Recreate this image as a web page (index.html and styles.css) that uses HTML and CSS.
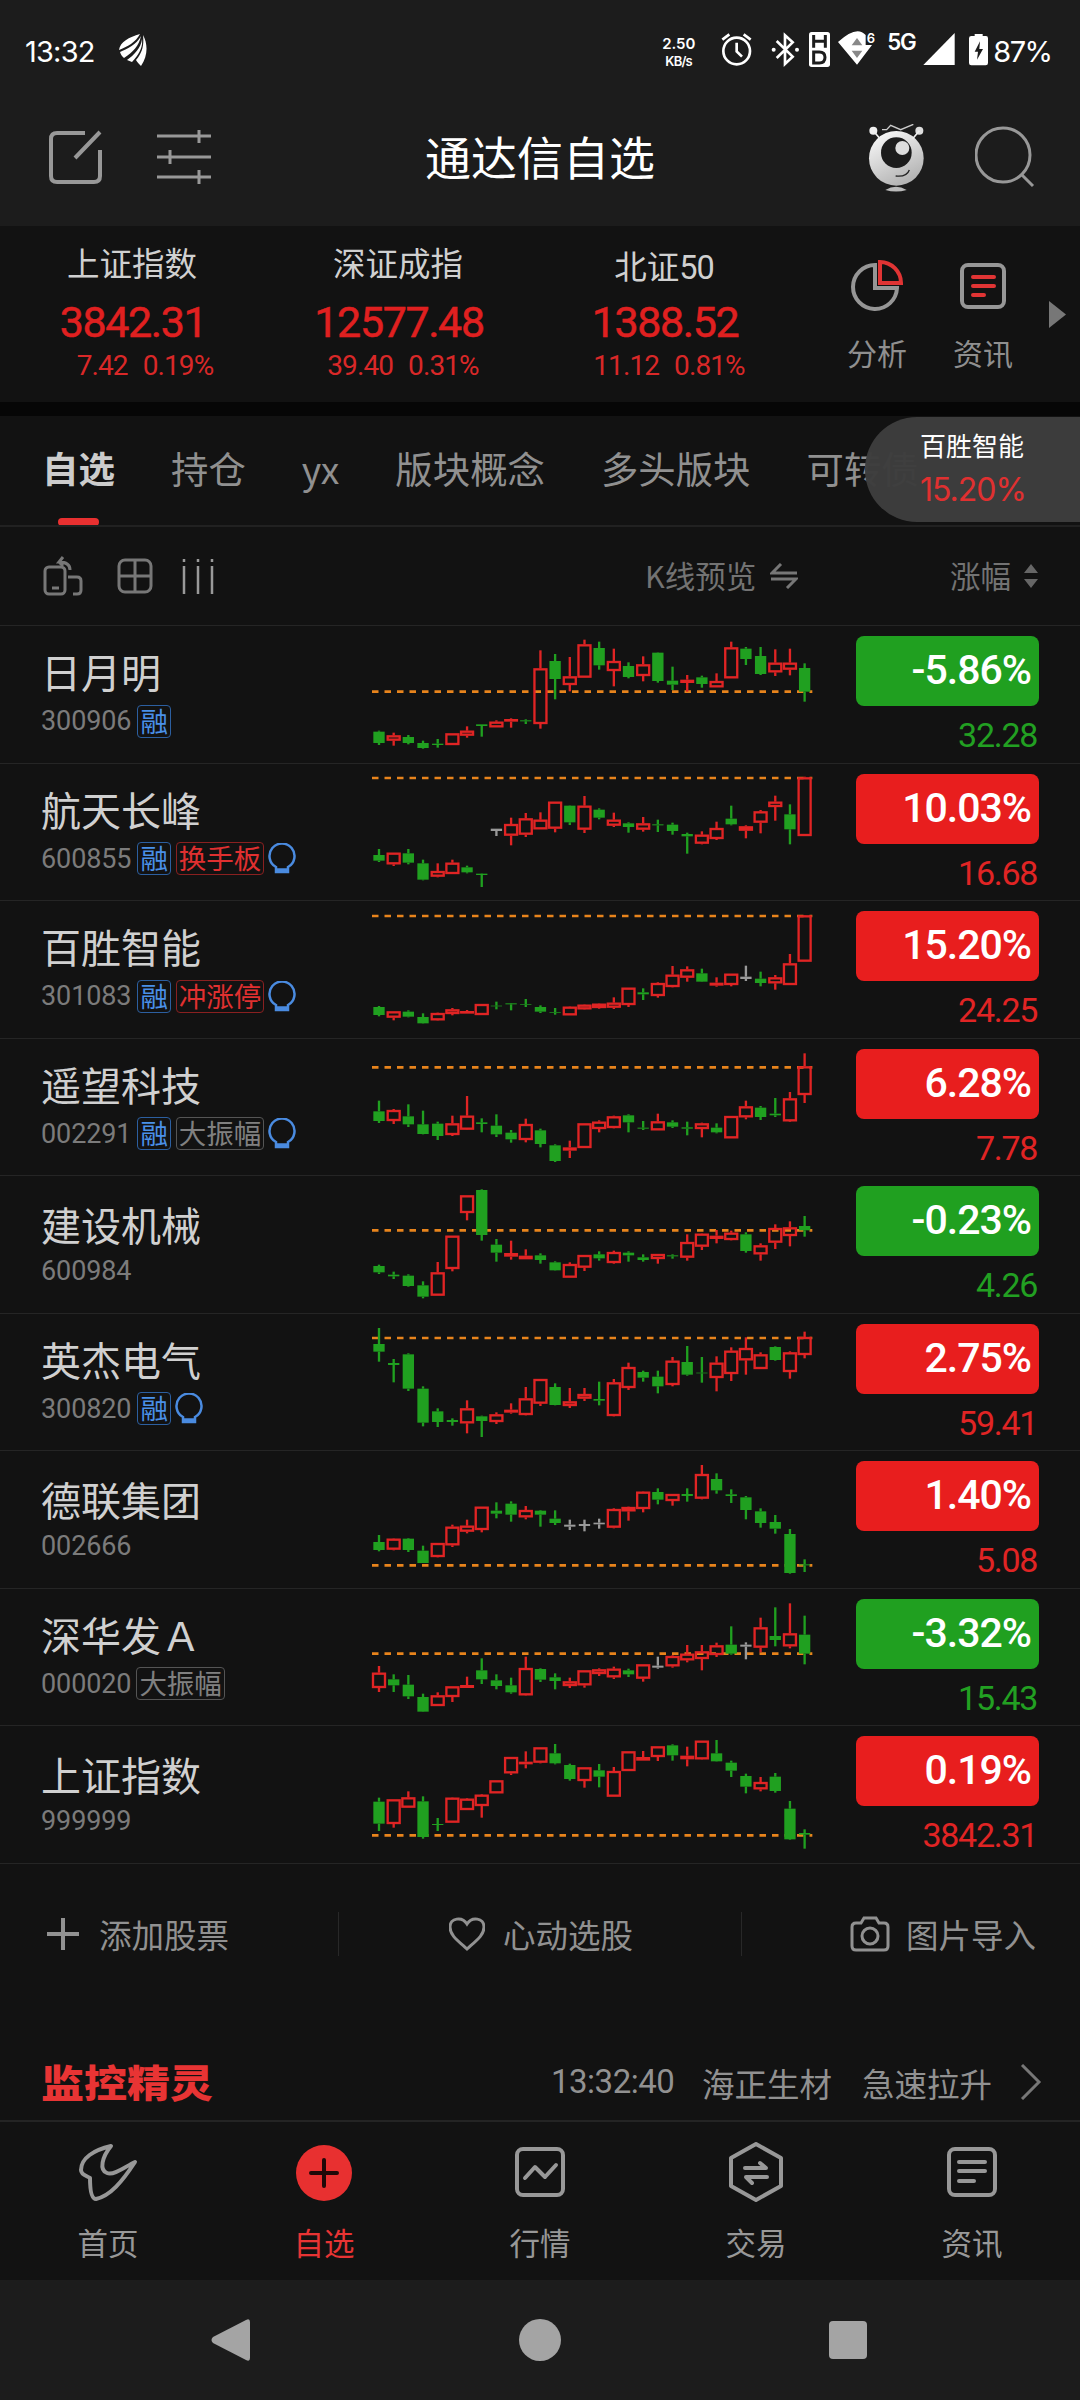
FILE: index.html
```html
<!DOCTYPE html>
<html lang="zh-CN">
<head>
	<meta charset="utf-8">
	<title>通达信自选</title>
	<link rel="stylesheet" href="styles.css">
</head>
<body>
	<div class="top">
		<div class="status">
			<span class="clock">13:32</span>
			<svg class="leaf" viewBox="0 0 28 32"><path d="M21 0C10 3 1 8 0 16C8 13 17 8 21 0ZM22 2C17 11 8 15 1 18C2 21 3 22 5 24C14 18 20 12 22 2ZM23 5C22 14 15 21 8 26L13 28C20 20 24 14 23 5ZM24 1C29 10 29 22 22 32C20 30 18 28 17 26C24 18 25 10 24 1Z"/></svg>
			<svg class="status-icons" viewBox="0 -60 1290 294">
				<text x="37" y="87" class="speed" textLength="99">2.50</text>
				<text x="46" y="139" class="speed small" textLength="82">KB/s</text>
				<g fill="none" stroke="#fff" stroke-width="8">
					<circle cx="260" cy="93" r="40"/>
					<path d="M260 68V94L276 110M217 59L238 43M302 59L281 43"/>
					<path d="M380 63L428 110L405 132V46L428 67L380 114"/>
				</g>
				<circle cx="371" cy="89" r="6"/><circle cx="441" cy="89" r="6"/>
				<rect x="477" y="36" width="63" height="105" rx="8"/>
				<path d="M491 45V83M526 45V83M491 64H526M491 96V129H508Q525 129 525 112Q525 96 508 96Z" fill="none" stroke="#1c1c1c" stroke-width="9"/>
				<path d="M564 66Q620 14 647 45V75H666L621 134Z"/>
				<path d="M621 54L637 76H605ZM605 92H637L621 114Z" fill="#888"/>
				<text x="650" y="69" class="speed small">6</text>
				<text x="712" y="90" class="net" textLength="88">5G</text>
				<path d="M914 39V135H820Z"/>
				<path d="M974 42H998V48H1008Q1014 48 1014 55V129Q1014 136 1007 136H964Q957 136 957 129V55Q957 48 964 48H974Z"/>
				<path d="M990 64L974 95H984L981 119L999 87H988Z" fill="#1c1c1c"/>
				<text x="1030" y="126" class="battery" textLength="179">87%</text>
			</svg>
		</div>
		<div class="titlebar">
			<svg class="edit" viewBox="0 0 54 54"><path d="M36 3H8Q2 3 2 9V46Q2 52 8 52H45Q51 52 51 46V20M51 2L26 28"/></svg>
			<svg class="sliders" viewBox="0 0 54 54"><path d="M0 6H54M0 27H54M0 47H54M42 0V13M13 20V34M42 40V54"/></svg>
			<h1>通达信自选</h1>
			<svg class="robot" viewBox="0 0 171 204">
				<defs><linearGradient id="skin" x1="0" y1="0" x2=".5" y2="1"><stop offset="0" stop-color="#fff"/><stop offset="1" stop-color="#b5b5b5"/></linearGradient></defs>
				<circle cx="85" cy="103" r="82" fill="url(#skin)"/>
				<circle cx="85" cy="86" r="46" fill="#1c1c1c"/>
				<circle cx="103" cy="72" r="21" fill="#ddd"/>
				<circle cx="16" cy="20" r="12" fill="#eee"/><circle cx="154" cy="20" r="12" fill="#ddd"/>
				<path d="M16 20L36 44M154 20L134 44" stroke="#eee" stroke-width="5"/>
				<path d="M42 17H56L68 4L98 17L136 1" fill="none" stroke="#ccc" stroke-width="4"/>
				<path d="M83 156Q116 160 124 138" fill="none" stroke="#222" stroke-width="4"/>
				<path d="M52 198Q84 178 116 198Q84 207 52 198Z" fill="#bbb"/>
			</svg>
			<svg class="search" viewBox="0 0 60 62"><circle cx="28" cy="29" r="27"/><path d="M46 48L58 60"/></svg>
		</div>
	</div>

	<div class="indexes">
		<div class="index">
			<div class="index-name">上证指数</div>
			<div class="index-value">3842.31</div>
			<div class="index-change shifted"><span>7.42</span><span>0.19%</span></div>
		</div>
		<div class="index">
			<div class="index-name">深证成指</div>
			<div class="index-value">12577.48</div>
			<div class="index-change"><span>39.40</span><span>0.31%</span></div>
		</div>
		<div class="index">
			<div class="index-name low">北证<span class="digits">50</span></div>
			<div class="index-value">1388.52</div>
			<div class="index-change"><span>11.12</span><span>0.81%</span></div>
		</div>
		<div class="shortcut">
			<svg viewBox="0 0 52 52"><path d="M24 5A22 22 0 1 0 46 28H24Z"/><path class="red" d="M29 2V23H50A21 21 0 0 0 29 2Z"/></svg>
			分析
		</div>
		<div class="shortcut">
			<svg viewBox="0 0 52 52"><rect x="5" y="5" width="42" height="42" rx="6"/><path class="red round" d="M16 17H37M16 26H37M16 35H27"/></svg>
			资讯
		</div>
		<svg class="more" viewBox="0 0 17 27"><path d="M0 0L17 13.5L0 27Z"/></svg>
	</div>

	<div class="tabs">
		<div class="tab active">自选</div>
		<div class="tab">持仓</div>
		<div class="tab">yx</div>
		<div class="tab">版块概念</div>
		<div class="tab">多头版块</div>
		<div class="tab">可转债</div>
		<div class="bubble">
			<span class="bubble-name">百胜智能</span>
			<span class="bubble-value">15.20%</span>
		</div>
	</div>

	<div class="tools">
		<svg class="rotate" viewBox="0 0 40 40"><rect x="2" y="11" width="20" height="27" rx="4"/><path d="M25 21H34Q38 21 38 25V34Q38 38 34 38H30M27 14Q27 6 16 6L20 1M16 6L20 10M9 32H16"/></svg>
		<svg class="grid" viewBox="0 0 36 36"><rect x="2" y="2" width="32" height="32" rx="6"/><path d="M18 2V34M2 18H34"/></svg>
		<svg class="cols" viewBox="0 0 32 36"><path d="M2 1V4M16 1V4M30 1V4M2 8V36M16 8V36M30 8V36"/></svg>
		<div class="preview">K线预览</div>
		<svg class="swap" viewBox="0 0 28 26"><path d="M11 1L2 10H27M1 16H26L17 25"/></svg>
		<div class="sort">涨幅</div>
		<svg class="arrows" viewBox="0 0 14 24"><path d="M7 0L14 9H0ZM0 15H14L7 24Z"/></svg>
	</div>

	<div class="stocks">
		<div class="stock">
			<div class="info"><div class="name">日月明</div><div class="code">300906<span class="tag blue">融</span></div></div>
			<svg class="chart"></svg>
			<div class="quote down"><div class="change">-5.86%</div><div class="price">32.28</div></div>
		</div>
		<div class="stock">
			<div class="info"><div class="name">航天长峰</div><div class="code">600855<span class="tag blue">融</span><span class="tag red">换手板</span><svg class="bulb" viewBox="0 0 28 31"><path d="M8 24A12.500 12.500 0 1 1 20 24V29H8ZM8 26.500H20"/></svg></div></div>
			<svg class="chart"></svg>
			<div class="quote up"><div class="change">10.03%</div><div class="price">16.68</div></div>
		</div>
		<div class="stock">
			<div class="info"><div class="name">百胜智能</div><div class="code">301083<span class="tag blue">融</span><span class="tag red">冲涨停</span><svg class="bulb" viewBox="0 0 28 31"><path d="M8 24A12.500 12.500 0 1 1 20 24V29H8ZM8 26.500H20"/></svg></div></div>
			<svg class="chart"></svg>
			<div class="quote up"><div class="change">15.20%</div><div class="price">24.25</div></div>
		</div>
		<div class="stock">
			<div class="info"><div class="name">遥望科技</div><div class="code">002291<span class="tag blue">融</span><span class="tag">大振幅</span><svg class="bulb" viewBox="0 0 28 31"><path d="M8 24A12.500 12.500 0 1 1 20 24V29H8ZM8 26.500H20"/></svg></div></div>
			<svg class="chart"></svg>
			<div class="quote up"><div class="change">6.28%</div><div class="price">7.78</div></div>
		</div>
		<div class="stock">
			<div class="info plain"><div class="name">建设机械</div><div class="code">600984</div></div>
			<svg class="chart"></svg>
			<div class="quote down"><div class="change">-0.23%</div><div class="price">4.26</div></div>
		</div>
		<div class="stock">
			<div class="info"><div class="name">英杰电气</div><div class="code">300820<span class="tag blue">融</span><svg class="bulb" viewBox="0 0 28 31"><path d="M8 24A12.500 12.500 0 1 1 20 24V29H8ZM8 26.500H20"/></svg></div></div>
			<svg class="chart"></svg>
			<div class="quote up"><div class="change">2.75%</div><div class="price">59.41</div></div>
		</div>
		<div class="stock">
			<div class="info plain"><div class="name">德联集团</div><div class="code">002666</div></div>
			<svg class="chart"></svg>
			<div class="quote up"><div class="change">1.40%</div><div class="price">5.08</div></div>
		</div>
		<div class="stock">
			<div class="info"><div class="name">深华发Ａ</div><div class="code">000020<span class="tag">大振幅</span></div></div>
			<svg class="chart"></svg>
			<div class="quote down"><div class="change">-3.32%</div><div class="price">15.43</div></div>
		</div>
		<div class="stock">
			<div class="info plain"><div class="name">上证指数</div><div class="code">999999</div></div>
			<svg class="chart"></svg>
			<div class="quote up"><div class="change">0.19%</div><div class="price">3842.31</div></div>
		</div>
	</div>

	<div class="actions">
		<div class="action">
			<svg class="plus" viewBox="0 0 32 32"><path d="M16 0V32M0 16H32"/></svg>添加股票
		</div>
		<div class="action middle">
			<svg class="heart" viewBox="0 0 36 34"><path d="M18 32C8 23 1 18 1 10C1 1 13-1 18 7C23-1 35 1 35 10C35 18 28 23 18 32Z"/></svg>心动选股
		</div>
		<div class="action last">
			<svg class="camera" viewBox="0 0 40 36"><path d="M6 7H11L14 2H26L29 7H34Q38 7 38 11V30Q38 34 34 34H6Q2 34 2 30V11Q2 7 6 7Z"/><circle cx="20" cy="20" r="8"/></svg>图片导入
		</div>
	</div>

	<div class="monitor">
		<span class="monitor-logo">监控精灵</span>
		<span class="monitor-time">13:32:40</span>
		<span class="monitor-stock">海正生材</span>
		<span class="monitor-event">急速拉升</span>
		<svg viewBox="0 0 22 36"><path d="M2 1L19 18L2 35"/></svg>
	</div>

	<div class="nav">
		<div class="nav-item">
			<svg viewBox="0 0 60 60"><path d="M33 4C16 8 3 16 3 28C3 33 9 34 12 36C12 46 13 57 18 57C32 54 44 40 57 20C48 24 36 34 29 31C21 28 24 15 33 4Z"/></svg>首页
		</div>
		<div class="nav-item active">
			<svg viewBox="0 0 60 60"><circle cx="30" cy="31" r="28"/><path class="dark" d="M30 18V44M17 31H43"/></svg>自选
		</div>
		<div class="nav-item">
			<svg viewBox="0 0 60 60"><rect x="7" y="7" width="46" height="46" rx="6"/><path d="M15 36L25 25L35 35L46 23"/></svg>行情
		</div>
		<div class="nav-item">
			<svg viewBox="0 0 60 60"><path d="M30 2L55 16V44L30 58L5 44V16ZM19 26H40L34 21M41 35H20L26 41"/></svg>交易
		</div>
		<div class="nav-item">
			<svg viewBox="0 0 60 60"><rect x="7" y="7" width="46" height="46" rx="6"/><path d="M17 20H43M17 29H43M17 39H32"/></svg>资讯
		</div>
	</div>

	<div class="system">
		<svg viewBox="0 0 44 44"><path d="M3 19L36 2Q40 0 40 4V40Q40 44 36 42L3 25Q0 22 3 19Z"/></svg>
		<svg viewBox="0 0 44 44"><circle cx="22" cy="22" r="21"/></svg>
		<svg viewBox="0 0 44 44"><rect x="3" y="3" width="38" height="38" rx="4"/></svg>
	</div>
	<script src="charts.js"></script>
</body>
</html>
```

FILE: styles.css
```css
body{
	margin:0;
	width:1080px;
	background-color:#121212;
	color:#d0d0d0;
	font-family:"Noto Sans CJK SC", sans-serif;
}
svg{
	flex:none;
}
.top{
	height:226px;
	background-color:#1c1c1c;
}
.status{
	display:flex;
	height:98px;
	color:#fff;
}
.clock{
	width:94px;
	padding-left:25px;
	font:29px/103px Inter, sans-serif;
	letter-spacing:-0.8px;
}
.leaf{
	width:28px;
	height:32px;
	margin-top:34px;
	fill:#fff;
}
.status-icons{
	width:430px;
	height:98px;
	margin-left:auto;
	fill:#fff;
}
.speed{
	font:600 45px Inter, sans-serif;
}
.speed.small{
	font-size:39px;
}
.net{
	font:600 67px Inter, sans-serif;
}
.battery{
	font:87px Inter, sans-serif;
}
.titlebar{
	display:flex;
	align-items:flex-start;
	padding:26px 0 0 49px;
}
.titlebar svg{
	fill:none;
	stroke:#989898;
	stroke-width:4;
}
.titlebar .edit, .sliders{
	width:54px;
	height:54px;
	margin:6px 54px 0 0;
}
.titlebar .sliders{
	stroke-width:3;
}
h1{
	width:230px;
	margin:-1px 0 0 160px;
	font-size:46px;
	font-weight:400;
	line-height:64px;
	color:#fff;
}
.titlebar .robot{
	width:57px;
	height:68px;
	margin-left:213px;
	stroke:none;
}
.titlebar .search{
	width:60px;
	height:62px;
	margin:2px 0 0 50px;
	stroke-width:3;
}

.indexes{
	display:flex;
	height:176px;
	border-bottom:14px solid #060606;
}
.index{
	width:266px;
	text-align:center;
}
.index-name{
	padding:16px 2px 0 0;
	height:54px;
	font-size:32.5px;
	line-height:40px;
}
.index-name.low{
	padding-top:19px;
	height:51px;
}
.digits{
	font-family:Roboto, sans-serif;
	letter-spacing:-1px;
}
.index-value{
	font:43px/52px Roboto, sans-serif;
	letter-spacing:-1.4px;
	-webkit-text-stroke:0.5px #e02020;
	color:#e02020;
}
.index-change{
	display:flex;
	justify-content:center;
	gap:15px;
	padding:3px 0 0 8px;
	font:28px/30px Roboto, sans-serif;
	letter-spacing:-0.9px;
	color:#d92828;
}
.index-change.shifted{
	padding-left:24px;
}
.shortcut{
	display:flex;
	flex-direction:column;
	align-items:center;
	width:106px;
	padding-top:34px;
	font-size:30px;
	line-height:40px;
	color:#8f8f8f;
}
.index + .shortcut{
	margin-left:26px;
}
.shortcut svg{
	width:52px;
	height:52px;
	margin-bottom:20px;
	fill:none;
	stroke:#969696;
	stroke-width:4;
}
.shortcut .red{
	stroke:#e03434;
}
.shortcut .round{
	stroke-linecap:round;
}
.more{
	width:17px;
	height:27px;
	margin:75px 0 0 13px;
	fill:#777;
}

.tabs{
	display:flex;
	gap:56px;
	box-sizing:border-box;
	position:relative;
	height:111px;
	padding:27px 0 0 42px;
	border-bottom:2px solid #212121;
	font-size:37.4px;
	line-height:50px;
	color:#909090;
	overflow:hidden;
}
.tab{
	flex:none;
	white-space:nowrap;
}
.tab.active{
	width:73px;
	font-size:36.5px;
	font-weight:700;
	color:#ccc;
}
.tab.active::after{
	content:"";
	display:block;
	width:41px;
	height:8px;
	margin:25px auto 0;
	border-radius:4px;
	background-color:#e83030;
}
/* floating quote over the end of the tab strip */
.bubble{
	position:absolute;
	right:0;
	top:1px;
	display:flex;
	flex-direction:column;
	box-sizing:border-box;
	width:215px;
	height:105px;
	padding:10px 0 0 55px;
	border-radius:52px 0 0 52px;
	background-color:rgba(61,61,61,0.98);
}
.bubble-name{
	font-size:26px;
	line-height:36px;
	color:#fff;
}
.bubble-value{
	font:32px/53px Inter, sans-serif;
	letter-spacing:-1px;
	color:#e03030;
}

.tools{
	display:flex;
	align-items:center;
	height:98px;
	padding-left:43px;
	font-size:30.5px;
	line-height:46px;
	color:#737373;
}
.tools svg{
	fill:none;
	stroke:#777;
	stroke-width:3;
}
.rotate{
	width:40px;
	height:40px;
}
.grid{
	width:36px;
	height:36px;
	margin-left:34px;
}
.tools .cols{
	width:32px;
	height:36px;
	margin-left:29px;
	stroke:#999;
	stroke-width:2.5;
}
.preview{
	width:110px;
	margin:0 0 3px 431px;
	white-space:nowrap;
}
.swap{
	width:28px;
	height:26px;
	margin-left:15px;
}
.sort{
	width:62px;
	margin:0 0 3px 152px;
}
.tools .arrows{
	width:14px;
	height:24px;
	margin-left:12px;
	fill:#666;
	stroke:none;
}

.stock{
	display:flex;
	box-sizing:border-box;
	height:137.5px;
	border-top:1px solid #252525;
}
.stocks{
	border-bottom:1px solid #252525;
}
.info{
	box-sizing:border-box;
	width:360px;
	padding:19px 0 0 41px;
}
.name{
	font-size:40px;
	line-height:52px;
	height:56px;
	margin-bottom:3px;
}
.plain .name{
	padding-top:3px;
	height:53px;
}
.code{
	display:flex;
	align-items:center;
	height:34px;
	font:27px/34px Roboto, sans-serif;
	letter-spacing:-0.1px;
	color:#7b7b7b;
}
.tag{
	box-sizing:border-box;
	height:33px;
	margin-left:5px;
	padding:0 2px;
	border:1.5px solid #555;
	border-radius:4px;
	font:27.5px/29px "Noto Sans CJK SC", sans-serif;
	color:#808080;
}
.tag.blue{
	margin-left:6px;
	border-color:#2c5fa0;
	color:#4a90e8;
}
.tag.red{
	border-color:#8a2020;
	color:#e03030;
}
.bulb{
	width:28px;
	height:31px;
	margin-left:4px;
	fill:none;
	stroke:#4a8be0;
	stroke-width:2.5;
}
.chart{
	width:470px;
	height:137px;
	margin-top:-1px;
}
.quote{
	width:183px;
	margin:10px 0 0 26px;
	text-align:right;
}
.change{
	height:70px;
	padding-right:8px;
	border-radius:8px;
	font:500 41px/69px Roboto, sans-serif;
	letter-spacing:-1px;
	color:#fff;
}
.price{
	padding-right:2px;
	font:34px/59px Roboto, sans-serif;
	letter-spacing:-1.3px;
}
.up{
	color:#e02424;
}
.up .change{
	background-color:#e81e1e;
}
.down{
	color:#22a022;
}
.down .change{
	background-color:#20a020;
}

.actions{
	display:flex;
	height:149px;
	font-size:32.5px;
	line-height:44px;
	color:#919191;
}
.action{
	display:flex;
	align-items:center;
	box-sizing:border-box;
	height:44px;
	width:338px;
	margin-top:48px;
	padding-left:47px;
}
.action.middle{
	width:404px;
	padding-left:110px;
	border:solid #282828;
	border-width:0 1px;
}
.action.last{
	padding-left:108px;
}
.action svg{
	margin-right:19px;
	fill:none;
	stroke:#919191;
	stroke-width:3;
}
.action .plus{
	width:32px;
	height:32px;
	margin-right:20px;
	stroke-width:4;
}
.action .heart{
	width:36px;
	height:34px;
	margin-right:18px;
}
.camera{
	width:40px;
	height:36px;
}
.action .camera{
	margin-right:16px;
}

.monitor{
	display:flex;
	align-items:center;
	box-sizing:border-box;
	height:109px;
	padding:32px 0 0 41px;
	border-bottom:2px solid #242424;
	font-size:32.5px;
	color:#919191;
}
.monitor-logo{
	width:173px;
	font-size:43px;
	font-weight:900;
	line-height:50px;
	white-space:nowrap;
	color:#e83434;
	transform:translateY(-2px) scaleY(0.88);
}
.monitor-time{
	width:122px;
	margin-left:337px;
	font:33px/40px Roboto, sans-serif;
	letter-spacing:-0.5px;
}
.monitor-stock{
	margin-left:29px;
}
.monitor-event{
	margin-left:30px;
}
.monitor svg{
	width:22px;
	height:36px;
	margin-left:28px;
	fill:none;
	stroke:#777;
	stroke-width:3;
}

.nav{
	display:flex;
	height:158px;
}
.nav-item{
	display:flex;
	flex-direction:column;
	align-items:center;
	width:216px;
	padding-top:20px;
	font-size:30.5px;
	line-height:40px;
	color:#989898;
}
.nav-item svg{
	width:60px;
	height:60px;
	margin-bottom:20px;
	fill:none;
	stroke:#989898;
	stroke-width:4;
	stroke-linejoin:round;
	stroke-linecap:round;
}
.nav-item.active{
	color:#e83434;
}
.nav-item circle{
	fill:#e83030;
	stroke:none;
}
.nav-item .dark{
	stroke:#200808;
}

.system{
	display:flex;
	justify-content:space-between;
	box-sizing:border-box;
	height:120px;
	padding:38px 210px 0 210px;
	background-color:#1c1c1c;
}
.system svg{
	width:44px;
	height:44px;
	fill:#a4a4a4;
}
```

FILE: charts.js
```js
// one line per chart: top of the plot, current price line, then candles "kind high top bottom low"
var charts = [
	[0, 200, "g 317 320 354 360,r 323 331 347 362,g 330 336 354 358,g 347 354 369 371,g 342 356 360 368,r 325 325 360 360,r 304 317 332 338,g 298 298 303 335,r 286 290 307 307,r 280 282 290 308,g 283 286 289 297,r 76 130 297 311,g 87 108 162 223,r 96 154 180 199,r 44 58 158 158,g 50 69 121 134,r 71 108 138 184,g 112 123 156 160,r 94 118 153 169,g 82 83 168 173,g 125 167 179 195,r 150 164 174 200,g 152 157 177 188,r 145 168 187 187,r 50 67 160 160,g 66 71 102 120,g 66 93 147 150,r 73 113 142 153,r 71 113 134 151,g 115 129 200 230"],
	[413, 458, "g 671 689 706 710,r 682 682 717 722,g 671 684 712 717,g 703 714 763 765,r 714 737 754 756,r 703 712 746 746,g 721 726 741 744,g 744 745 749 785,w 610 610 617 632,r 577 596 631 660,r 563 579 628 635,r 561 583 612 612,r 529 529 610 621,g 540 541 591 599,r 512 541 613 623,g 549 553 577 582,r 562 583 601 605,g 591 594 605 622,r 575 594 613 619,g 583 597 600 620,g 592 598 617 628,g 622 626 633 685,r 618 628 655 657,r 589 608 641 644,g 541 580 597 600,r 600 603 616 639,r 554 558 592 624,r 511 529 545 586,g 537 567 612 657,r 454 456 632 632"],
	[0, 48, "g 318 321 345 349,r 334 334 353 361,g 331 335 350 352,g 340 351 370 371,r 338 339 361 362,r 324 328 342 346,r 330 333 341 341,r 312 312 345 345,g 305 317 319 328,g 309 310 313 331,g 297 313 315 321,g 316 321 335 339,g 324 337 339 344,r 319 320 346 346,r 313 314 328 329,r 310 311 324 326,r 292 308 323 327,r 263 263 315 321,g 265 277 283 300,r 247 249 288 293,r 198 224 261 262,r 199 208 233 245,g 206 220 245 246,r 232 248 257 260,r 221 221 255 259,w 197 230 237 243,g 215 236 249 259,r 225 232 250 269,r 162 190 255 255,r 45 46 185 185"],
	[413, 501, "g 601 633 662 668,r 626 629 662 671,g 612 648 672 680,g 631 672 701 702,g 664 670 707 719,r 646 669 704 707,r 587 646 688 689,g 654 666 671 696,g 642 676 702 710,g 689 697 717 727,r 655 671 719 726,g 685 690 731 741,g 732 735 782 785,r 721 741 751 773,r 669 669 743 743,r 660 664 686 696,r 646 648 683 684,g 642 645 666 696,g 662 682 685 689,r 640 663 690 690,g 660 666 679 683,g 664 681 685 705,r 667 669 686 711,g 669 682 696 699,r 647 647 714 714,r 601 618 651 657,g 617 622 650 659,g 593 640 645 650,r 575 594 663 665,r 459 498 584 608"],
	[15, 181, "g 284 288 307 312,g 305 314 319 327,g 313 317 348 350,g 334 346 380 385,r 276 307 377 377,r 197 197 297 304,r 76 76 129 151,g 58 60 195 212,g 207 224 248 275,r 212 249 260 269,r 238 257 268 268,g 250 256 270 281,g 274 277 301 302,r 277 282 323 323,r 255 255 293 303,g 244 253 265 272,r 242 246 279 281,g 244 248 256 275,g 253 262 270 275,r 252 252 267 281,g 253 256 259 266,r 193 216 263 272,r 190 191 230 240,r 180 197 207 220,r 182 188 210 211,g 187 193 243 248,r 220 226 253 272,r 163 174 218 237,r 154 172 198 229,g 138 168 181 200"],
	[428, 503, "g 473 521 544 574,g 566 578 584 636,g 549 552 655 662,g 648 655 757 768,g 714 723 755 770,g 744 749 755 766,r 690 714 759 789,g 736 738 752 800,r 726 732 755 761,r 699 718 727 730,r 650 684 734 735,r 626 626 700 707,g 639 650 704 705,r 653 693 707 713,r 653 671 685 692,g 634 686 691 705,r 626 636 737 738,r 577 590 653 659,g 601 605 622 634,g 601 619 648 669,r 560 571 644 648,g 527 575 613 616,g 560 607 609 637,r 558 577 623 663,r 531 541 611 632,r 501 533 570 613,r 546 552 596 596,g 528 530 569 571,r 543 546 605 625,r 484 500 554 564"],
	[15, 361, "g 270 291 315 319,r 280 281 314 316,g 279 281 315 321,g 302 317 354 354,r 294 294 336 337,r 239 245 301 306,r 224 242 260 265,r 185 185 255 262,g 172 197 206 220,g 169 176 209 230,r 183 195 217 223,g 195 197 209 245,g 196 221 234 240,w 224 239 245 255,w 224 237 243 259,w 221 233 238 251,r 190 192 248 250,r 185 186 199 227,r 139 140 192 202,g 130 141 164 178,r 147 147 168 182,g 130 147 153 170,r 60 87 161 163,g 85 102 136 146,g 133 148 153 174,g 153 157 195 223,g 190 199 234 248,g 210 231 251 266,g 252 267 384 386,g 343 358 361 381"],
	[428, 625, "r 662 682 728 740,g 687 702 720 740,g 689 718 753 761,g 745 755 799 800,r 741 750 782 782,r 723 723 755 770,r 694 719 728 728,g 639 675 702 716,g 687 705 722 732,g 697 720 741 745,r 634 668 750 751,g 669 671 703 710,g 684 696 707 732,r 697 708 722 728,r 675 675 720 727,r 669 672 686 692,r 664 670 696 701,g 670 675 687 695,r 657 657 700 709,w 634 661 667 670,r 630 632 663 667,r 599 625 645 651,r 599 618 641 675,r 592 600 629 635,g 543 598 625 628,w 591 598 604 642,r 517 546 607 621,g 486 572 584 603,r 474 564 603 609,g 511 568 625 657"],
	[30, 361, "g 248 260 326 348,r 253 253 327 338,r 229 247 278 278,g 244 259 366 371,g 309 327 330 348,r 247 248 323 323,r 249 251 285 285,r 237 239 273 308,r 196 196 235 235,r 126 126 175 180,r 109 140 148 160,r 97 97 143 145,g 87 115 145 148,g 146 150 192 197,r 157 157 198 218,g 147 166 185 217,r 156 168 245 245,r 109 109 168 168,r 108 126 137 137,r 94 94 126 138,g 88 91 121 137,r 95 122 133 154,r 77 77 133 134,g 75 115 139 140,g 137 143 167 186,g 176 183 215 235,r 186 201 223 229,g 174 185 228 233,g 258 281 373 375,g 343 354 359 401"]
];
var colors = {r: "#e02424", g: "#20a020", w: "#999999"};

function wick(x, from, to, color){
	if(to <= from) return "";
	return '<path d="M' + x + ' ' + from + 'V' + to + '" stroke="' + color + '" stroke-width="7"/>';
}

function drawChart(svg, chart){
	var html = '<path d="M36 ' + chart[1] + 'H1357" stroke="#e8841c" stroke-width="8" stroke-dasharray="19.5 18"/>';
	chart[2].split(",").forEach(function(item, i){
		var c = item.split(" ");
		var color = colors[c[0]];
		var high = +c[1], top = +c[2], bottom = +c[3], low = +c[4];
		var x = 57 + i * 44.03;
		html += wick(x, high, top, color) + wick(x, bottom, low, color);
		if(c[0] == "r" && bottom - top > 12)
			html += '<rect x="' + (x - 18) + '" y="' + (top + 3) + '" width="36" height="' + (bottom - top - 6) + '" fill="none" stroke="' + color + '" stroke-width="7"/>';
		else {
			var w = c[0] == "r" ? 42 : 34;
			html += '<rect x="' + (x - w / 2) + '" y="' + top + '" width="' + w + '" height="' + (bottom - top) + '" fill="' + color + '"/>';
		}
	});
	svg.setAttribute("viewBox", "0 " + chart[0] + " 1410 411");
	svg.innerHTML = html;
}

var svgs = document.querySelectorAll(".chart");
for(var i = 0; i < svgs.length; i++)
	drawChart(svgs[i], charts[i]);
```
